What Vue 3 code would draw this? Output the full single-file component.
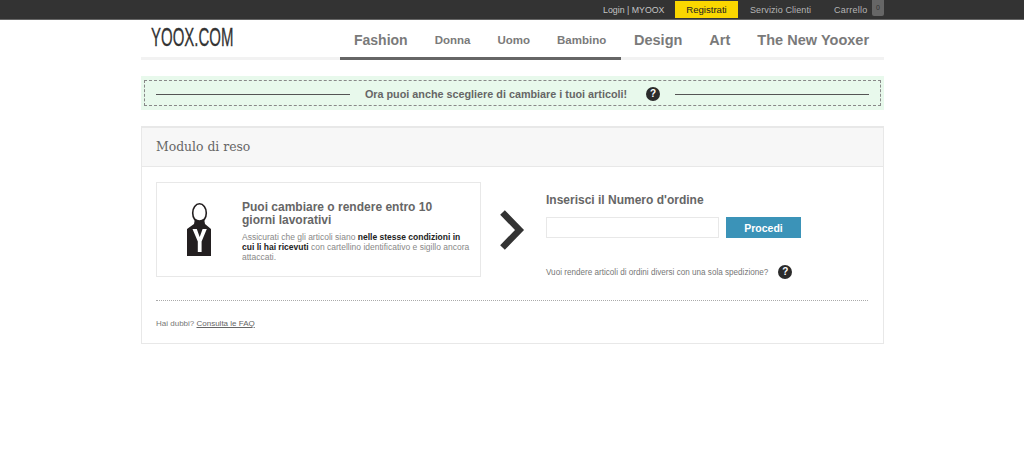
<script setup>
const subNav = ['Donna', 'Uomo', 'Bambino']
const otherNav = ['Design', 'Art', 'The New Yooxer']
</script>

<template>
  <div class="page">
    <div class="topbar">
      <div class="wrap topbar-inner">
        <a class="top-link login">Login | MYOOX</a>
        <a class="top-link register">Registrati</a>
        <a class="top-link service">Servizio Clienti</a>
        <a class="top-link cart">Carrello</a>
        <span class="cart-count">0</span>
      </div>
    </div>

    <div class="wrap header">
      <div class="logo"><span class="logo-text">YOOX.COM</span></div>
      <nav class="nav">
        <div class="nav-active">
          <a class="nav-main fashion">Fashion</a>
          <a v-for="item in subNav" :key="item" class="nav-sub">{{ item }}</a>
        </div>
        <a v-for="item in otherNav" :key="item" class="nav-main other">{{ item }}</a>
      </nav>
    </div>

    <div class="wrap banner">
      <div class="banner-inner">
        <span class="rule"></span>
        <span class="banner-text">Ora puoi anche scegliere di cambiare i tuoi articoli!</span>
        <span class="help banner-help">?</span>
        <span class="rule"></span>
      </div>
    </div>

    <div class="wrap card">
      <h1 class="card-title">Modulo di reso</h1>
      <div class="card-body">
        <div class="columns">
          <div class="info">
            <svg class="tag" width="28" height="54" viewBox="0 0 28 54">
              <ellipse cx="13.5" cy="10" rx="6.8" ry="9.2" fill="none" stroke="#231f20" stroke-width="1.6" />
              <path d="M9 15.5 Q13.5 19 18 15.5 L19 21 L25 26 L25 53 L1 53 L1 26 L8 21 Z" fill="#231f20" />
              <path d="M6.5 26 L10.8 26 L13.7 34 L16.6 26 L20.8 26 L15.6 38.5 L15.6 49 L11.8 49 L11.8 38.5 Z" fill="#fff" />
            </svg>
            <div class="info-text">
              <h2>Puoi cambiare o rendere entro 10 giorni lavorativi</h2>
              <p>Assicurati che gli articoli siano <b>nelle stesse condizioni in cui li hai ricevuti</b> con cartellino identificativo e sigillo ancora attaccati.</p>
            </div>
          </div>
          <svg class="chevron" width="26" height="40" viewBox="0 0 26 40">
            <path d="M2.5 2.5 L19.5 20 L2.5 37.5" fill="none" stroke="#333" stroke-width="6.5" />
          </svg>
          <div class="order">
            <h2>Inserisci il Numero d'ordine</h2>
            <div class="order-form">
              <input class="order-input" type="text" />
              <button class="order-btn" type="button">Procedi</button>
            </div>
            <div class="multi">
              <span>Vuoi rendere articoli di ordini diversi con una sola spedizione?</span>
              <span class="help">?</span>
            </div>
          </div>
        </div>
        <div class="faq">Hai dubbi? <a>Consulta le FAQ</a></div>
      </div>
    </div>
  </div>
</template>

<style>
html, body { margin: 0; background: #fff; }
</style>

<style scoped>
.page {
  font-family: "Liberation Sans", Arial, sans-serif;
  height: 461px;
  overflow: hidden;
  background: #fff;
}
.wrap {
  width: 743px;
  margin-left: 141px;
  box-sizing: border-box;
}
.topbar {
  height: 20px;
  box-sizing: border-box;
  background: #333;
  border-bottom: 1px solid #666;
}
.topbar-inner {
  display: flex;
  align-items: flex-start;
  height: 19px;
  font-size: 9px;
  color: #bbb;
  white-space: nowrap;
}
.top-link { line-height: 20px; flex: none; }
.login { margin-left: 462px; width: 61px; font-size: 8.8px; color: #c4c4c4; }
.register {
  margin-left: 11px;
  width: 63px;
  height: 17px;
  margin-top: 1px;
  line-height: 18px;
  text-align: center;
  background: #fad700;
  color: #222;
  font-size: 9.6px;
}
.service { margin-left: 12px; width: 62px; letter-spacing: 0.1px; color: #b5b5b5; }
.cart { margin-left: 22px; width: 34px; letter-spacing: 0.25px; color: #b5b5b5; }
.cart-count {
  margin-left: 4px;
  width: 12px;
  height: 16px;
  background: #666;
  border-radius: 0 0 2px 2px;
  font-size: 7px;
  line-height: 16px;
  text-align: center;
  color: #333;
}
.header {
  height: 40px;
  display: flex;
  border-bottom: 3px solid #f2f2f2;
}
.logo { width: 199px; flex: none; box-sizing: border-box; padding-left: 10px; }
.logo-text {
  display: inline-block;
  font-size: 25px;
  line-height: 35px;
  color: #333;
  -webkit-text-stroke: 0.3px #333;
  transform: scaleX(0.6);
  transform-origin: left center;
}
.nav {
  display: flex;
  align-items: flex-start;
  flex: 1;
  font-weight: bold;
}
.nav-active {
  display: flex;
  align-items: flex-start;
  flex: none;
  width: 281px;
  height: 40px;
  box-sizing: border-box;
  padding-left: 14px;
  border-bottom: 3px solid #666;
}
.nav-main { font-size: 14.5px; line-height: 40px; color: #7a7a7a; white-space: nowrap; }
.nav-main.fashion { font-size: 14px; }
.nav-sub { font-size: 11.5px; line-height: 40px; color: #7a7a7a; margin-left: 27px; }
.nav-main.other { margin-left: 13px; }
.nav-main.other + .nav-main.other { margin-left: 27px; letter-spacing: 0.02px; }
.banner {
  margin-top: 16px;
  height: 34px;
  padding: 4px 3px;
  background: #e8f9ec;
}
.banner-inner {
  height: 26px;
  box-sizing: border-box;
  border: 1px dashed #888;
  display: flex;
  align-items: center;
  padding: 2px 11px 0;
}
.rule { height: 1px; background: #555; width: 194px; }
.banner-text {
  margin-left: 15px;
  font-size: 10.8px;
  font-weight: bold;
  color: #666;
  white-space: nowrap;
}
.help {
  width: 14px;
  height: 14px;
  border-radius: 50%;
  background: #2b2b2b;
  color: #fff;
  font-size: 10px;
  font-weight: bold;
  line-height: 14px;
  text-align: center;
  flex: none;
}
.banner-help { margin: 0 15px 0 19px; }
.card {
  margin-top: 16px;
  height: 218px;
  border: 1px solid #e8e8e8;
  border-top-width: 2px;
}
.card-title {
  margin: 0;
  height: 39px;
  box-sizing: border-box;
  padding-left: 14px;
  background: #f7f7f7;
  border-bottom: 1px solid #e8e8e8;
  font-family: "DejaVu Serif", "Liberation Serif", serif;
  font-weight: normal;
  font-size: 12.4px;
  line-height: 38px;
  color: #666;
}
.card-body { padding: 15px 15px 0 14px; }
.columns {
  display: flex;
  align-items: flex-start;
  height: 118px;
  border-bottom: 1px dotted #aaa;
}
.info {
  width: 325px;
  height: 95px;
  box-sizing: border-box;
  border: 1px solid #e8e8e8;
  display: flex;
  align-items: flex-start;
  flex: none;
}
.tag { margin: 20px 0 0 29px; flex: none; }
.info-text { margin-left: 28px; width: 228px; }
.info-text h2 {
  margin: 18px 0 0;
  width: 210px;
  font-size: 12px;
  line-height: 13px;
  color: #666;
  font-weight: bold;
}
.info-text p {
  margin: 5px 0 0;
  font-size: 8.5px;
  line-height: 10px;
  color: #888;
}
.info-text b { color: #222; }
.chevron { margin: 28px 0 0 19px; flex: none; }
.order { margin-left: 20px; }
.order h2 {
  margin: 12px 0 0;
  font-size: 12px;
  line-height: 13px;
  color: #666;
  font-weight: bold;
}
.order-form { display: flex; margin-top: 10px; }
.order-input {
  width: 173px;
  height: 21px;
  box-sizing: border-box;
  border: 1px solid #e8e8e8;
  padding: 0;
  outline: none;
}
.order-btn {
  margin-left: 7px;
  width: 75px;
  height: 21px;
  border: 0;
  padding: 0;
  background: #3b93b8;
  color: #fff;
  font-family: inherit;
  font-size: 10.5px;
  font-weight: bold;
}
.multi {
  display: flex;
  align-items: center;
  margin-top: 27px;
  font-size: 8.15px;
  color: #777;
  white-space: nowrap;
}
.multi .help { margin-left: 10px; }
.faq {
  margin-top: 18px;
  font-size: 8px;
  line-height: 10px;
  color: #777;
}
.faq a { text-decoration: underline; color: #666; }
</style>
